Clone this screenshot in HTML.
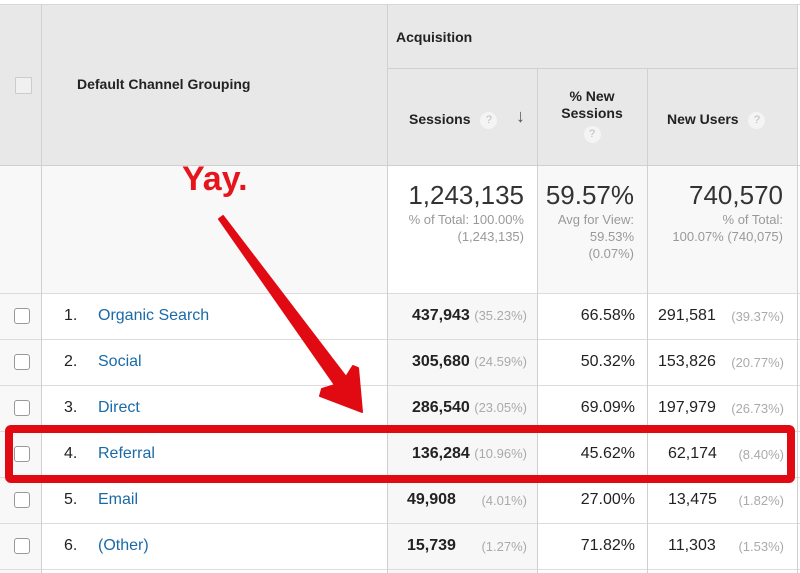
<!DOCTYPE html>
<html><head><meta charset="utf-8"><style>
*{margin:0;padding:0;box-sizing:border-box}
body{width:800px;height:573px;overflow:hidden;background:#fff;font-family:"Liberation Sans",Arial,sans-serif;position:relative;color:#222}
.a{position:absolute}
.hd{background:#e8e8e8}
.vl{position:absolute;width:1px;background:#d0d0d0}
.hl{position:absolute;height:1px;background:#dcdcdc;left:0;width:800px}
.b{font-weight:bold;font-size:14px;color:#222}
.q{display:inline-block;width:17px;height:17px;border-radius:50%;background:#f4f4f4;color:#bbb;font-size:11px;text-align:center;line-height:17px;font-weight:normal;vertical-align:middle}
.cb{position:absolute;left:14px;width:16px;height:16px;border:1px solid #999;border-radius:3px;background:#fff}
.r{position:absolute;font-size:16px;white-space:nowrap}
.r b{font-size:16px}
.lk{color:#1a6aa8}
.g{color:#aaa;font-size:13px}
.rt{text-align:right}
</style></head><body>
<div class="a hd" style="left:0;top:4px;width:797px;height:161px"></div>
<div class="a" style="left:0;top:165px;width:797px;height:128px;background:#f8f8f8"></div>
<div class="a" style="left:387px;top:165px;width:150px;height:128px;background:#fff"></div>
<div class="a" style="left:387px;top:293px;width:150px;height:280px;background:#f7f7f7"></div>
<div class="a" style="left:0;top:293px;width:41px;height:280px;background:#f8f8f8"></div>
<div class="hl" style="top:4px;background:#d8d8d8"></div>
<div class="hl" style="top:68px;left:387px;width:410px;background:#d0d0d0"></div>
<div class="hl" style="top:165px;background:#d0d0d0"></div>
<div class="hl" style="top:293px"></div>
<div class="hl" style="top:339px"></div>
<div class="hl" style="top:385px"></div>
<div class="hl" style="top:431px"></div>
<div class="hl" style="top:477px"></div>
<div class="hl" style="top:523px"></div>
<div class="hl" style="top:569px"></div>
<div class="vl" style="left:41px;top:4px;height:569px"></div>
<div class="vl" style="left:387px;top:4px;height:569px"></div>
<div class="vl" style="left:537px;top:68px;height:505px"></div>
<div class="vl" style="left:647px;top:68px;height:505px"></div>
<div class="vl" style="left:797px;top:4px;height:569px"></div>
<div class="cb" style="top:77px;width:17px;height:17px;left:15px;background:#f0f0f0;border-color:#ccc;border-radius:1px"></div>
<div class="a b" style="left:77px;top:76px">Default Channel Grouping</div>
<div class="a b" style="left:396px;top:29px">Acquisition</div>
<div class="a b" style="left:409px;top:111px">Sessions <span class="q" style="margin-left:6px">?</span></div>
<div class="a" style="left:516px;top:106px;font-size:18px;color:#555">&#8595;</div>
<div class="a b" style="left:537px;top:88px;width:110px;text-align:center;line-height:17px">% New<br>Sessions<br><span class="q" style="margin-top:4px">?</span></div>
<div class="a b" style="left:667px;top:111px">New Users <span class="q" style="margin-left:6px">?</span></div>
<div class="a rt" style="left:387px;top:180px;width:137px;font-size:26px;color:#333">1,243,135</div>
<div class="a rt" style="left:387px;top:211px;width:137px;font-size:13px;color:#999;line-height:17px">% of Total: 100.00%<br>(1,243,135)</div>
<div class="a rt" style="left:537px;top:180px;width:97px;font-size:26px;color:#333">59.57%</div>
<div class="a rt" style="left:537px;top:211px;width:97px;font-size:13px;color:#999;line-height:17px">Avg for View:<br>59.53%<br>(0.07%)</div>
<div class="a rt" style="left:647px;top:180px;width:136px;font-size:26px;color:#333">740,570</div>
<div class="a rt" style="left:647px;top:211px;width:136px;font-size:13px;color:#999;line-height:17px">% of Total:<br>100.07% (740,075)</div>

<div class="a" style="left:182px;top:160px;font-size:34px;font-weight:bold;color:#e8141c">Yay.</div>

<div class="cb" style="top:308px"></div><div class="r" style="left:64px;top:307px">1.</div><div class="r lk" style="left:98px;top:307px">Organic Search</div>
<div class="r rt" style="left:387px;top:307px;width:140px"><b>437,943</b> <span class="g">(35.23%)</span></div>
<div class="r rt" style="left:537px;top:307px;width:98px">66.58%</div>
<div class="r" style="left:658px;top:307px"><span>291,581</span></div><div class="r g rt" style="left:700px;top:309px;width:84px">(39.37%)</div>

<div class="cb" style="top:354px"></div><div class="r" style="left:64px;top:353px">2.</div><div class="r lk" style="left:98px;top:353px">Social</div>
<div class="r rt" style="left:387px;top:353px;width:140px"><b>305,680</b> <span class="g">(24.59%)</span></div>
<div class="r rt" style="left:537px;top:353px;width:98px">50.32%</div>
<div class="r" style="left:658px;top:353px">153,826</div><div class="r g rt" style="left:700px;top:355px;width:84px">(20.77%)</div>

<div class="cb" style="top:400px"></div><div class="r" style="left:64px;top:399px">3.</div><div class="r lk" style="left:98px;top:399px">Direct</div>
<div class="r rt" style="left:387px;top:399px;width:140px"><b>286,540</b> <span class="g">(23.05%)</span></div>
<div class="r rt" style="left:537px;top:399px;width:98px">69.09%</div>
<div class="r" style="left:658px;top:399px">197,979</div><div class="r g rt" style="left:700px;top:401px;width:84px">(26.73%)</div>

<div class="cb" style="top:446px"></div><div class="r" style="left:64px;top:445px">4.</div><div class="r lk" style="left:98px;top:445px">Referral</div>
<div class="r rt" style="left:387px;top:445px;width:140px"><b>136,284</b> <span class="g">(10.96%)</span></div>
<div class="r rt" style="left:537px;top:445px;width:98px">45.62%</div>
<div class="r" style="left:668px;top:445px">62,174</div><div class="r g rt" style="left:700px;top:447px;width:84px">(8.40%)</div>

<div class="cb" style="top:492px"></div><div class="r" style="left:64px;top:491px">5.</div><div class="r lk" style="left:98px;top:491px">Email</div>
<div class="r" style="left:407px;top:491px"><b>49,908</b></div><div class="r g rt" style="left:450px;top:493px;width:77px">(4.01%)</div>
<div class="r rt" style="left:537px;top:491px;width:98px">27.00%</div>
<div class="r" style="left:668px;top:491px">13,475</div><div class="r g rt" style="left:700px;top:493px;width:84px">(1.82%)</div>

<div class="cb" style="top:538px"></div><div class="r" style="left:64px;top:537px">6.</div><div class="r lk" style="left:98px;top:537px">(Other)</div>
<div class="r" style="left:407px;top:537px"><b>15,739</b></div><div class="r g rt" style="left:450px;top:539px;width:77px">(1.27%)</div>
<div class="r rt" style="left:537px;top:537px;width:98px">71.82%</div>
<div class="r" style="left:668px;top:537px">11,303</div><div class="r g rt" style="left:700px;top:539px;width:84px">(1.53%)</div>

<div class="a" style="left:5px;top:425px;width:790px;height:58px;border:8px solid #e20a12;border-radius:6px"></div>
<svg class="a" style="left:0;top:0" width="800" height="573">
<polygon points="219,219 223,216 346,377 353,366 358,368 362,412 320,396 322,389 335,385" fill="#e20a12" stroke="#e20a12" stroke-linejoin="round" stroke-width="2"/>
</svg>
</body></html>
